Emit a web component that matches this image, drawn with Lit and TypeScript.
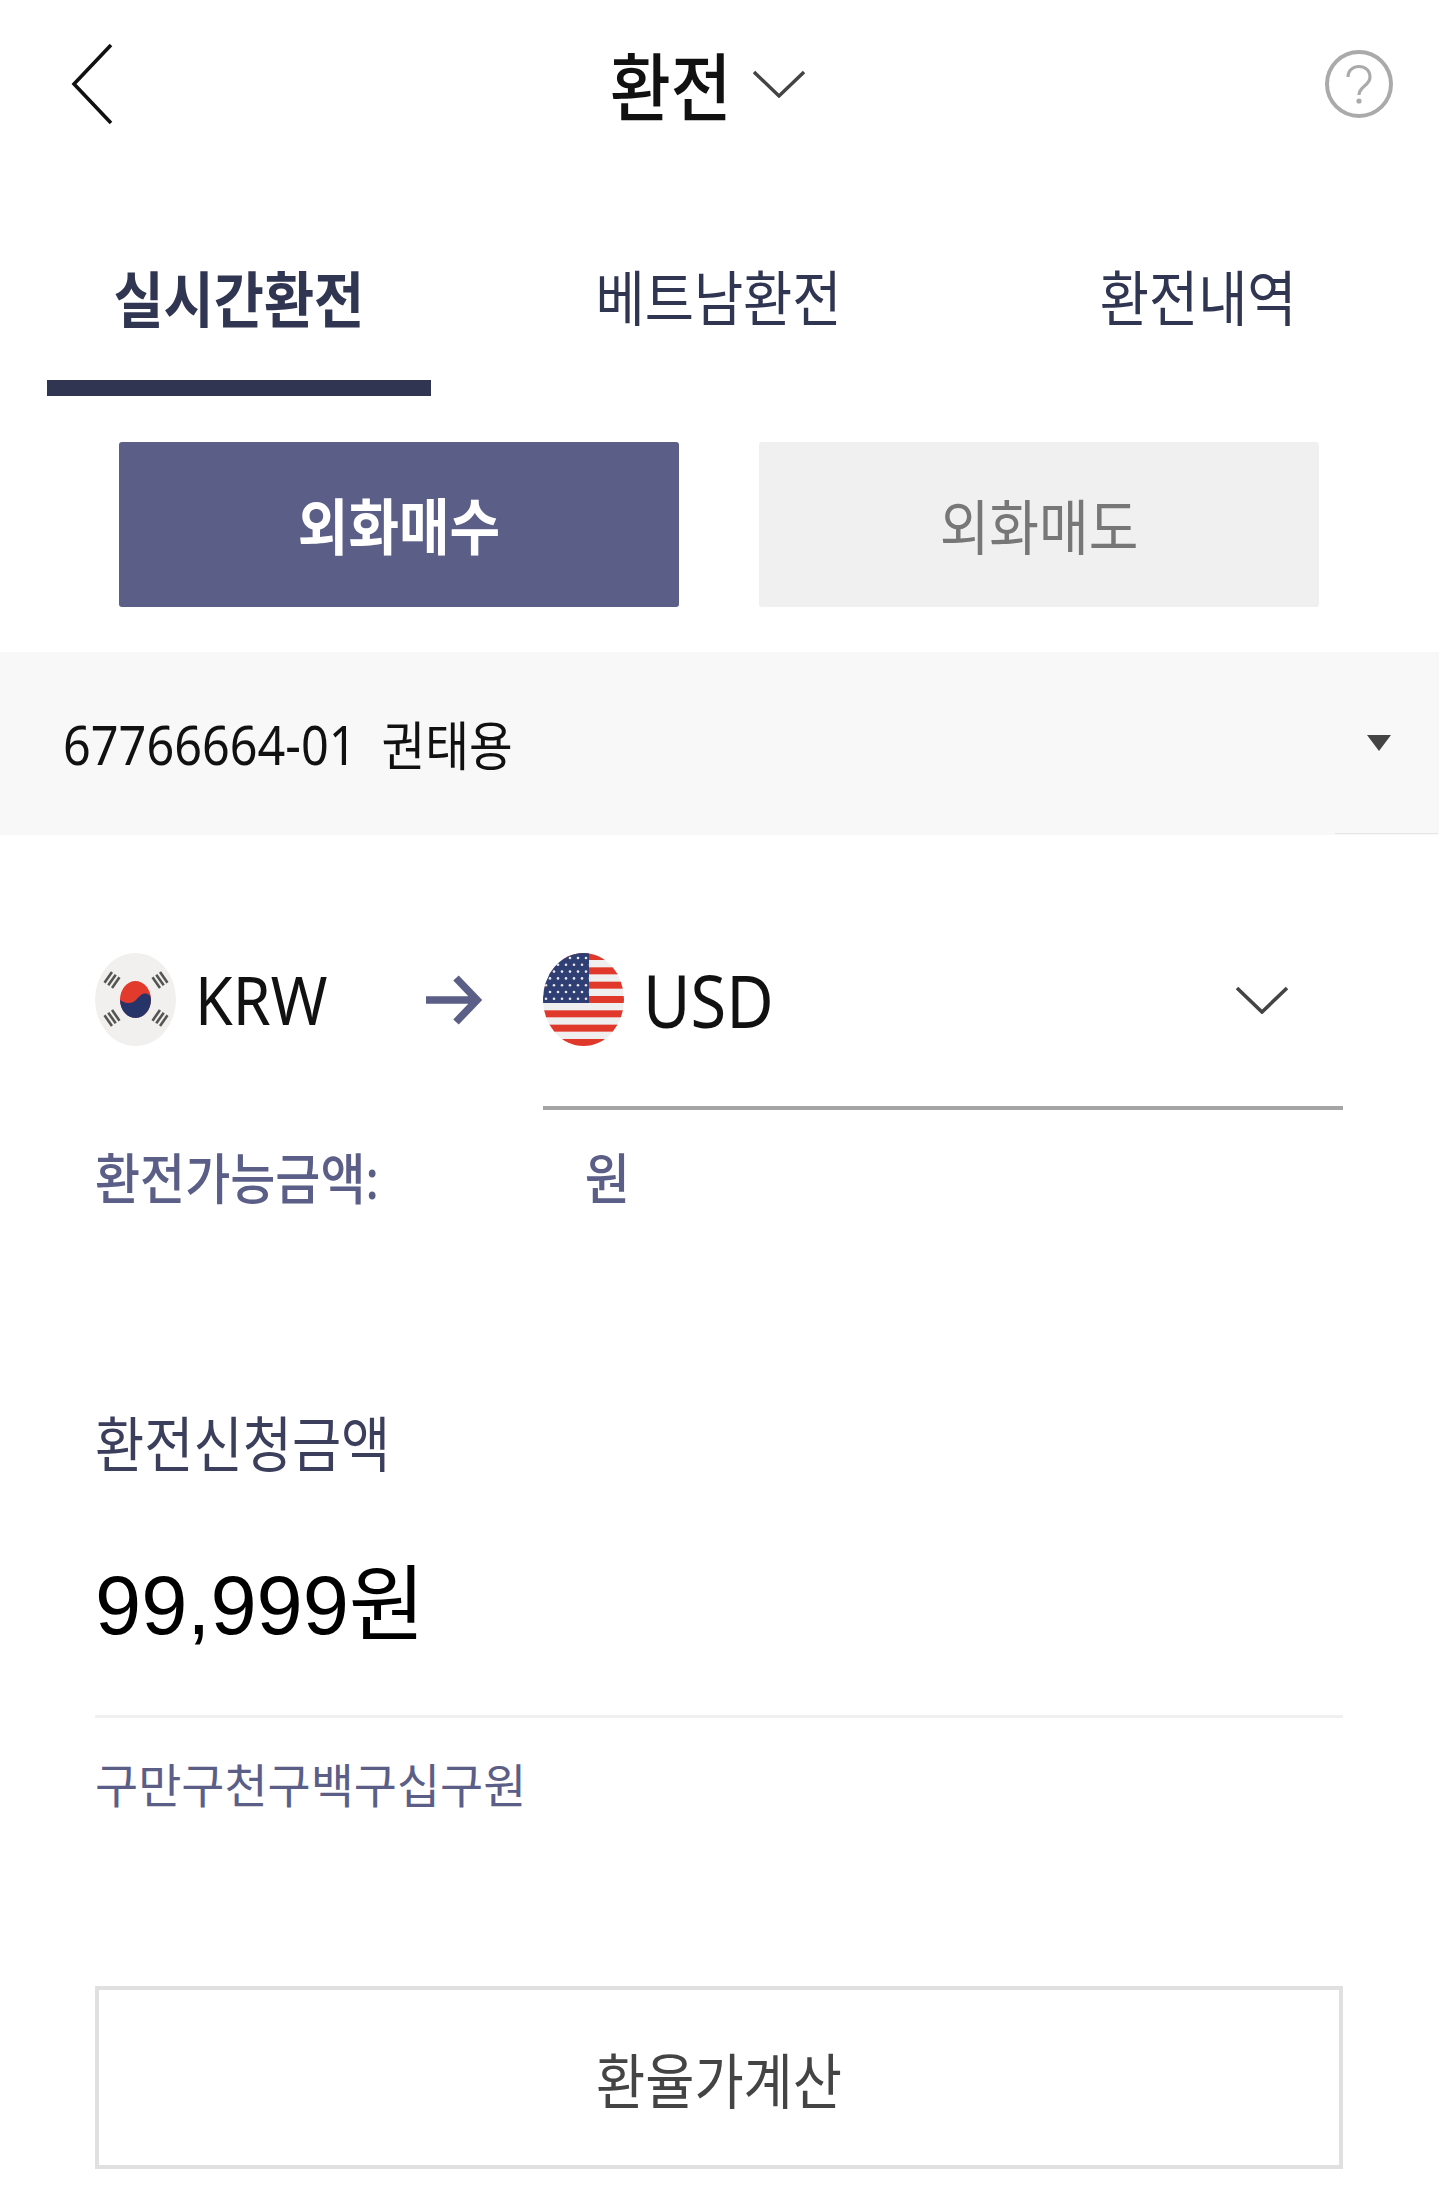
import { LitElement, html, css, svg } from 'lit';
import { customElement } from 'lit/decorators.js';

const tabs = ['실시간환전', '베트남환전', '환전내역'];

// one trigram of the Korean flag, drawn as three bars
const trigram = (cx: number, cy: number, angle: number) => svg`
  <g transform="translate(${cx} ${cy}) rotate(${angle})" stroke="#555" stroke-width="2.6">
    <path d="M-6.5 -4.6H6.5M-6.5 0H6.5M-6.5 4.6H6.5"/>
  </g>`;

const usStripes = [0, 1, 2, 3, 4, 5, 6].map(
  (i) => svg`<rect x="0" y=${i * 14.33} width="81" height="7" fill="#e0392c"/>`
);

const usStars = [0, 1, 2, 3, 4, 5, 6].flatMap((row) =>
  [0, 1, 2, 3, 4, 5].map(
    (col) =>
      svg`<circle cx=${3 + col * 8 + (row % 2 ? 4 : 0)} cy=${5 + row * 6.8} r="1.3" fill="#e8e8ee"/>`
  )
);

@customElement('app-root')
export class AppRoot extends LitElement {
  static styles = css`
    :host {
      display: block;
      width: 1439px;
      height: 2193px;
      background: #fff;
      overflow: hidden;
      font-family: 'Noto Sans', 'Noto Sans CJK KR', sans-serif;
    }
    svg {
      display: block;
      flex: none;
    }
    .tall {
      display: inline-block;
      transform: scaleY(1.12);
    }
    .header {
      display: flex;
      align-items: center;
      height: 167px;
      padding: 0 44px 0 71px;
      box-sizing: border-box;
    }
    .title {
      display: flex;
      align-items: center;
      margin-left: 497px;
      font-size: 66px;
      color: #111;
      line-height: 80px;
      font-weight: 500;
    }
    .title .tall {
      margin-top: 4px;
    }
    .title svg {
      margin-left: 22px;
    }
    .help {
      margin-left: auto;
    }
    .tabs {
      display: grid;
      grid-template-columns: repeat(3, 1fr);
      height: 229px;
    }
    .tab {
      display: flex;
      flex-direction: column;
      align-items: center;
      padding: 0 49px 0 47px;
      color: #303552;
      font-size: 53.5px;
      line-height: 70px;
    }
    .tab span {
      margin-top: 97px;
    }
    .tab.active {
      font-weight: 700;
      font-size: 54.5px;
    }
    .tab.active::after {
      content: '';
      align-self: stretch;
      height: 16px;
      margin-top: 46px;
      background: #303552;
    }
    .toggle {
      display: grid;
      grid-template-columns: 560px 560px;
      gap: 80px;
      margin-top: 46px;
      padding-left: 119px;
    }
    .toggle div {
      display: flex;
      align-items: center;
      justify-content: center;
      height: 165px;
      padding-bottom: 3px;
      box-sizing: border-box;
      border-radius: 3px;
      font-size: 54px;
      background: #f0f0f0;
      color: #777;
    }
    .toggle .on {
      background: #5b5e87;
      color: #fff;
      font-weight: 700;
      font-size: 55px;
    }
    .account {
      position: relative;
      display: flex;
      align-items: center;
      gap: 25px;
      height: 183px;
      margin-top: 45px;
      padding-left: 63px;
      background: #f8f8f8;
      color: #111;
      font-size: 48.6px;
    }
    .account .owner {
      font-size: 47.5px;
    }
    .caret {
      position: absolute;
      left: 1367px;
      top: 83px;
    }
    .account::after {
      content: '';
      position: absolute;
      left: 1335px;
      right: 1px;
      bottom: 1px;
      height: 1px;
      background: #e5e5e5;
    }
    .content {
      padding: 118px 96px 0 95px;
    }
    .currency {
      display: flex;
      align-items: flex-start;
    }
    .from {
      display: flex;
      align-items: center;
      width: 448px;
      height: 93px;
      flex: none;
      font-size: 61px;
      color: #111;
    }
    .from .code {
      margin: -2px 0 0 19px;
    }
    .from .arrow {
      margin-left: 99px;
    }
    .to {
      display: flex;
      align-items: flex-start;
      flex: 1;
      height: 157px;
      box-sizing: border-box;
      border-bottom: 4px solid #a5a5a5;
      font-size: 65px;
      color: #111;
    }
    .to .code {
      margin-left: 19px;
      line-height: 94px;
    }
    .to svg:last-child {
      margin: 33px 55px 0 auto;
    }
    .avail {
      display: flex;
      margin-top: 38px;
      font-size: 49px;
      line-height: 60px;
      font-weight: 500;
      color: #5b5e87;
    }
    .avail .won {
      margin-left: 206px;
    }
    .label {
      margin-top: 202px;
      font-size: 53.5px;
      line-height: 70px;
      color: #3b3f5c;
    }
    .amount {
      margin-top: 71px;
      height: 110px;
      font-family: 'Liberation Sans', 'Noto Sans CJK KR', sans-serif;
      font-size: 83px;
      line-height: 110px;
      color: #000;
    }
    .rule {
      height: 3px;
      margin-top: 54px;
      background: #f0f0f0;
    }
    .words {
      margin-top: 37px;
      font-size: 46.9px;
      line-height: 60px;
      color: #5b5e87;
    }
    .calc {
      display: flex;
      align-items: center;
      justify-content: center;
      box-sizing: border-box;
      height: 183px;
      margin-top: 171px;
      border: 4px solid #e0e0e0;
      font-size: 53.5px;
      color: #444;
    }
  `;

  render() {
    return html`
      <div class="header">
        <svg width="42" height="82" viewBox="0 0 42 82" fill="none" stroke="#111" stroke-width="3.6">
          <path d="M40 2 L3 41 L40 80"/>
        </svg>
        <div class="title">
          <span class="tall">환전</span>
          <svg width="52" height="28" viewBox="0 0 52 28" fill="none" stroke="#444" stroke-width="3.4">
            <path d="M1 2 L26 26 L51 2"/>
          </svg>
        </div>
        <svg class="help" width="72" height="72" viewBox="0 0 72 72" fill="none" stroke="#aaa">
          <circle cx="36" cy="36" r="32" stroke-width="4"/>
          <path d="M25 29 C25 15 47 15 47 29 C47 38 36 38 36 47" stroke-width="3.2"/>
          <circle cx="36" cy="53" r="2.6" fill="#aaa" stroke="none"/>
        </svg>
      </div>

      <div class="tabs">
        ${tabs.map(
          (t, i) => html`<div class="tab ${i === 0 ? 'active' : ''}"><span class="tall">${t}</span></div>`
        )}
      </div>

      <div class="toggle">
        <div class="on"><span class="tall">외화매수</span></div>
        <div><span class="tall">외화매도</span></div>
      </div>

      <div class="account">
        <span class="tall">67766664-01</span>
        <span class="tall owner">권태용</span>
        <svg class="caret" width="24" height="16" viewBox="0 0 24 16"><path d="M0 0H24L12 16Z" fill="#444"/></svg>
      </div>

      <div class="content">
        <div class="currency">
          <div class="from">
            <svg width="81" height="93" viewBox="0 0 81 93">
              <ellipse cx="40.5" cy="46.5" rx="40.5" ry="46.5" fill="#f1f0ee"/>
              <ellipse cx="40.5" cy="46.5" rx="15.5" ry="18.5" fill="#e23b2e"/>
              <path d="M25 46.5 C25 58 33 65 40.5 65 C48 65 56 58 56 46.5 C56 41 50 39 46 42 C42 45 40 50 34 50 C29 50 26 48 25 46.5Z" fill="#27346a"/>
              ${trigram(17, 27, -55)} ${trigram(65, 27, 55)} ${trigram(17, 65, 55)} ${trigram(65, 65, -55)}
            </svg>
            <span class="code tall">KRW</span>
            <svg class="arrow" width="56" height="50" viewBox="0 0 56 50" fill="none" stroke="#5b5e87" stroke-width="7.5">
              <path d="M0 25H51M30 3 L51 25 L30 47"/>
            </svg>
          </div>
          <div class="to">
            <svg width="81" height="93" viewBox="0 0 81 93">
              <defs>
                <clipPath id="us"><ellipse cx="40.5" cy="46.5" rx="40.5" ry="46.5"/></clipPath>
              </defs>
              <g clip-path="url(#us)">
                <rect width="81" height="93" fill="#efefef"/>
                ${usStripes}
                <rect width="46" height="50" fill="#2f3f73"/>
                ${usStars}
              </g>
            </svg>
            <span class="code tall">USD</span>
            <svg width="52" height="28" viewBox="0 0 52 28" fill="none" stroke="#444" stroke-width="3.6">
              <path d="M1 2 L26 26 L51 2"/>
            </svg>
          </div>
        </div>

        <div class="avail">
          <span class="tall">환전가능금액:</span>
          <span class="tall won">원</span>
        </div>

        <div class="label"><span class="tall">환전신청금액</span></div>
        <div class="amount">99,999원</div>
        <div class="rule"></div>
        <div class="words">구만구천구백구십구원</div>
        <div class="calc"><span class="tall">환율가계산</span></div>
      </div>
    `;
  }
}
